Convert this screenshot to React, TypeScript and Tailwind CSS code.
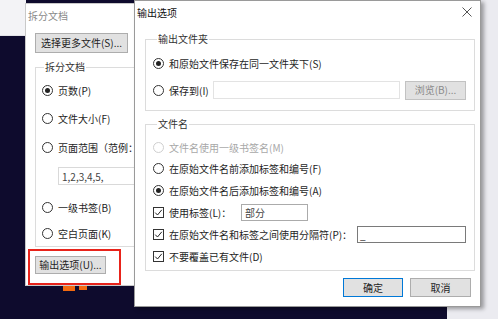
import type { ReactNode } from "react";

function Radio({ checked, disabled }: { checked?: boolean; disabled?: boolean }) {
  return (
    <span
      className={`flex h-[11px] w-[11px] shrink-0 items-center justify-center rounded-full border bg-white ${
        disabled ? "border-[#cfcfcf]" : "border-[#333]"
      }`}
    >
      {checked && <span className="h-[5px] w-[5px] rounded-full bg-[#222]" />}
    </span>
  );
}

function Check() {
  return (
    <span className="flex h-[11px] w-[11px] shrink-0 items-center justify-center border border-[#333] bg-white">
      <svg width="9" height="9" viewBox="0 0 9 9">
        <path d="M1.2 4.6 L3.5 7 L7.8 1.8" fill="none" stroke="#222" strokeWidth="1" />
      </svg>
    </span>
  );
}

function Row({ children, className = "" }: { children: ReactNode; className?: string }) {
  return <div className={`flex h-[20px] items-center gap-[5px] ${className}`}>{children}</div>;
}

function Btn({ children, className = "" }: { children: ReactNode; className?: string }) {
  return (
    <div
      className={`flex items-center justify-center border bg-[#e1e1e1] text-[10px] leading-none ${className}`}
    >
      {children}
    </div>
  );
}

export default function App() {
  return (
    <div className="relative h-[319px] w-[498px] overflow-hidden bg-[#0e0b2d] font-['Noto_Sans_CJK_SC',sans-serif] text-[10px] text-[#1e1e1e]">
      {/* desktop behind */}
      <div className="absolute left-0 top-0 h-[36px] w-[26px] border-b border-[#e2e2e6] bg-[#f3f3f6]" />
      <div className="absolute right-0 top-0 h-full w-[17px] bg-[#ebebf0]" />
      <div className="absolute bottom-0 right-0 h-[13px] w-[51px] bg-[#ebebf0]" />
      <div className="absolute left-[63px] top-[286px] h-[5px] w-[12px] bg-[#f36a10]" />
      <div className="absolute left-[79px] top-[286px] h-[4px] w-[8px] bg-[#f36a10]" />

      {/* split document window */}
      <div className="absolute left-[25px] top-[3px] flex h-[283px] w-[130px] flex-col border border-[#c9c9c9] bg-white">
        <div className="flex h-[22px] items-center pl-[2px] text-[#8a8a8a]">拆分文档</div>
        <Btn className="ml-[9px] mt-[7px] h-[20px] w-[93px] border-[#adadad]">选择更多文件(S)...</Btn>
        <fieldset className="ml-[9px] mt-[7px] w-[140px] border border-[#dcdcdc] pb-[3px] pl-[6px]">
          <legend className="ml-[2px] px-[1px] leading-[14px] text-[#333]">拆分文档</legend>
          <Row className="mt-[6px]">
            <Radio checked />
            <span>页数(P)</span>
          </Row>
          <Row className="mt-[8px]">
            <Radio />
            <span>文件大小(F)</span>
          </Row>
          <Row className="mt-[9px]">
            <Radio />
            <span className="whitespace-nowrap">页面范围（范例：</span>
          </Row>
          <div className="ml-[16px] mt-[10px] flex h-[18px] w-[110px] items-center border border-[#d9d9d9] pl-[3px] text-[#444]">
            1,2,3,4,5,
          </div>
          <Row className="mt-[12px]">
            <Radio />
            <span>一级书签(B)</span>
          </Row>
          <Row className="mt-[6px]">
            <Radio />
            <span>空白页面(K)</span>
          </Row>
        </fieldset>
        <Btn className="ml-[9px] mt-[9px] h-[18px] w-[71px] border-[#adadad]">输出选项(U)...</Btn>
      </div>

      {/* red highlight */}
      <div className="absolute left-[28px] top-[249px] h-[36px] w-[93px] border-2 border-[#e8231a]" />

      {/* output options dialog */}
      <div className="absolute left-[134px] top-0 flex h-[307px] w-[347px] flex-col border border-[#9a9a9a] bg-white shadow-[3px_2px_4px_rgba(0,0,0,0.35)]">
        <div className="flex h-[22px] items-center justify-between pl-[2px] pr-[8px]">
          <span className="text-[#111]">输出选项</span>
          <svg width="10" height="10" viewBox="0 0 10 10">
            <path d="M0.5 0.5 L9.5 9.5 M9.5 0.5 L0.5 9.5" stroke="#555" strokeWidth="1" />
          </svg>
        </div>

        <fieldset className="ml-[10px] mt-[9px] w-[328px] border border-[#dcdcdc] pb-[10px] pl-[7px] pr-[8px]">
          <legend className="ml-[4px] px-[1px] leading-[14px] text-[#333]">输出文件夹</legend>
          <Row className="mt-[7px]">
            <Radio checked />
            <span>和原始文件保存在同一文件夹下(S)</span>
          </Row>
          <div className="mt-[7px] flex h-[20px] items-center">
            <Radio />
            <span className="ml-[5px] w-[44px]">保存到(I)</span>
            <div className="h-[18px] w-[187px] border border-[#e3e3e3]" />
            <Btn className="ml-[5px] h-[19px] w-[61px] border-[#c2c2c2] bg-[#cccccc] text-[#8a8a8a]">浏览(B)...</Btn>
          </div>
        </fieldset>

        <fieldset className="ml-[10px] mt-[6px] w-[328px] border border-[#dcdcdc] pb-[4px] pl-[7px] pr-[8px]">
          <legend className="ml-[4px] px-[1px] leading-[14px] text-[#333]">文件名</legend>
          <Row className="mt-[6px] h-[21px] text-[#a8a8a8]">
            <Radio disabled />
            <span>文件名使用一级书签名(M)</span>
          </Row>
          <Row className="h-[21px]">
            <Radio />
            <span>在原始文件名前添加标签和编号(F)</span>
          </Row>
          <Row className="h-[23px]">
            <Radio checked />
            <span>在原始文件名后添加标签和编号(A)</span>
          </Row>
          <div className="flex h-[21px] items-center">
            <Check />
            <span className="ml-[5px] w-[72px]">使用标签(L)：</span>
            <div className="flex h-[17px] w-[67px] items-center border border-[#ababab] pl-[3px] text-[#444]">部分</div>
          </div>
          <div className="flex h-[23px] items-center">
            <Check />
            <span className="ml-[5px] w-[188px]">在原始文件名和标签之间使用分隔符(P)：</span>
            <div className="flex h-[17px] w-[109px] items-end border border-[#7a7a7a] pb-[2px] pl-[2px] leading-none">_</div>
          </div>
          <Row className="h-[20px]">
            <Check />
            <span>不要覆盖已有文件(D)</span>
          </Row>
        </fieldset>

        <div className="mr-[9px] mt-[7px] flex justify-end gap-[7px]">
          <Btn className="h-[19px] w-[60px] border-[#0078d7]">确定</Btn>
          <Btn className="h-[19px] w-[61px] border-[#adadad]">取消</Btn>
        </div>
      </div>
    </div>
  );
}
